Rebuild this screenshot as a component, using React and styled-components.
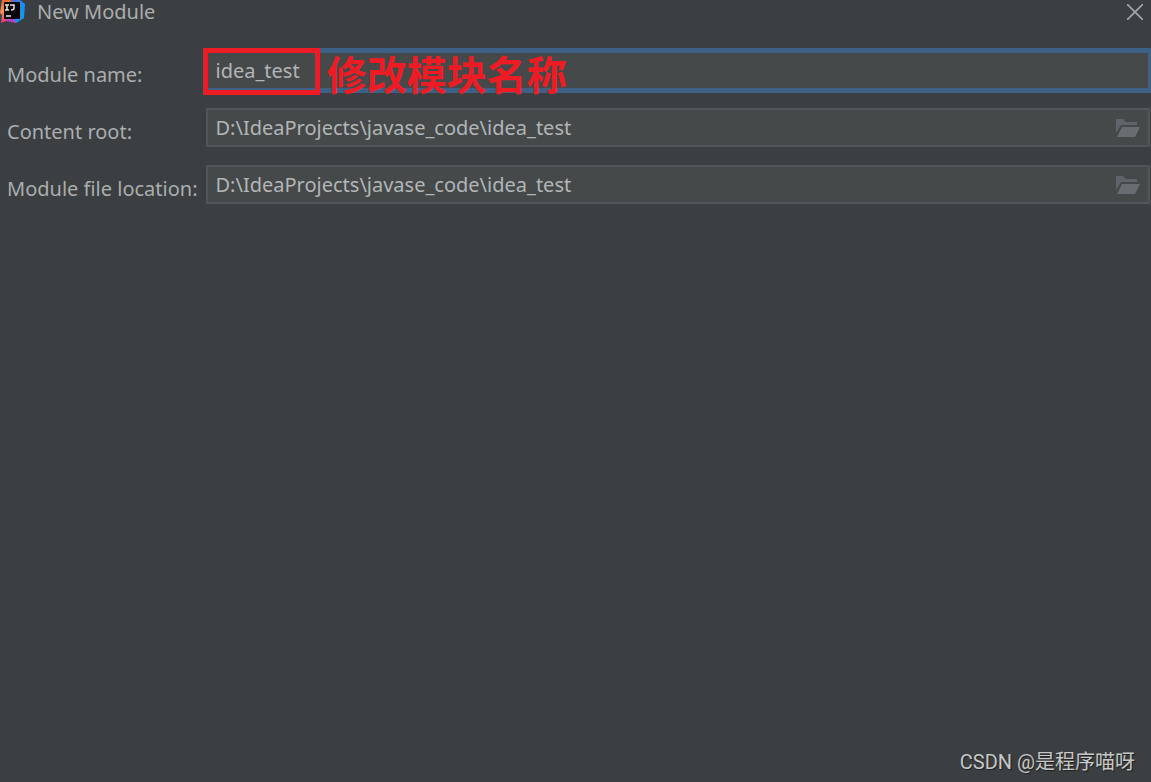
import { useState } from 'react';
import { createGlobalStyle, styled } from 'styled-components';

const FIELDS = [
  { id: 'moduleName', label: 'Module name:', value: 'idea_test', note: '修改模块名称' },
  { id: 'contentRoot', label: 'Content root:', value: 'D:\\IdeaProjects\\javase_code\\idea_test', browse: true },
  {
    id: 'moduleLocation',
    label: 'Module file location:',
    value: 'D:\\IdeaProjects\\javase_code\\idea_test',
    browse: true,
  },
];

function IdeaLogo() {
  return (
    <svg width='26' height='24' viewBox='0 0 26 24' aria-hidden='true'>
      <defs>
        <linearGradient id='ideaWarm' x1='0' y1='0' x2='0' y2='1'>
          <stop offset='0' stopColor='#e8692e' />
          <stop offset='0.5' stopColor='#f0925a' />
          <stop offset='1' stopColor='#ee2f78' />
        </linearGradient>
        <linearGradient id='ideaCool' x1='0' y1='0' x2='1' y2='1'>
          <stop offset='0' stopColor='#5a6ad0' />
          <stop offset='0.5' stopColor='#188cf0' />
          <stop offset='1' stopColor='#149ff5' />
        </linearGradient>
      </defs>
      <path d='M11 0h9l5 4-1 14-8 5-8-4z' fill='url(#ideaCool)' />
      <path d='M2 0h9v19l-5 2-5 2 1-8-2-2z' fill='url(#ideaWarm)' />
      <path d='M5 18l7-1 4 6-10-2z' fill='#b83fbd' />
      <path d='M4 2h16v17H4z' fill='#080609' />
      <path d='M5 5h4M7 5v5M5 10h4M10 5h4v3q0 2-3 2' fill='none' stroke='#e8e4e8' strokeWidth='1.5' />
      <path d='M6 16h5' stroke='#e8e4e8' strokeWidth='1.5' />
    </svg>
  );
}

function FolderIcon() {
  return (
    <svg width='24' height='18' viewBox='0 0 24 18' aria-hidden='true'>
      <path d='M0 0h7l3 3h11v3H5L0 14z' fill='#5f6468' />
      <path d='M6 8h18l-5 10H1z' fill='#686d71' />
    </svg>
  );
}

/**
 * 모듈 설정 한 줄
 * @param props
 * @param {string} props.note 입력값 옆에 표시되는 설명
 * @param {boolean} props.browse 폴더 선택 버튼 표시 여부
 */
function Field({ id, label, value, note, browse }) {
  const [text, setText] = useState(value);

  return (
    <>
      <StyledLabel htmlFor={id}>{label}</StyledLabel>
      <StyledInputBox $active={!!note}>
        <StyledInput id={id} value={text} spellCheck={false} onChange={event => setText(event.target.value)} />
        {browse && (
          <StyledIconButton type='button' aria-label='Browse'>
            <FolderIcon />
          </StyledIconButton>
        )}
        {note && (
          <StyledCallout>
            <StyledFrame />
            <StyledNote>{note}</StyledNote>
          </StyledCallout>
        )}
      </StyledInputBox>
    </>
  );
}

function App() {
  return (
    <StyledDialog>
      <GlobalStyle />
      <StyledTitleBar>
        <IdeaLogo />
        <StyledTitle>New Module</StyledTitle>
        <StyledIconButton type='button' aria-label='Close'>
          <svg width='16' height='16' viewBox='0 0 16 16' aria-hidden='true'>
            <path d='M0 0l16 16M16 0L0 16' stroke='#a4a6a7' strokeWidth='1.6' />
          </svg>
        </StyledIconButton>
      </StyledTitleBar>
      <StyledForm>
        {FIELDS.map(field => (
          <Field key={field.id} {...field} />
        ))}
      </StyledForm>
      <StyledWatermark>CSDN @是程序喵呀</StyledWatermark>
    </StyledDialog>
  );
}

export default App;

const GlobalStyle = createGlobalStyle`
  * {
    box-sizing: border-box;
  }

  body {
    margin: 0;
    background-color: #3c3f41;
    color: #abadae;
    font-family: 'Noto Sans', 'Noto Sans CJK SC', sans-serif;
    font-size: 20px;
    line-height: 24px;
  }
`;

const StyledDialog = styled.main`
  display: flex;
  flex-direction: column;
  min-height: 100vh;
`;

const StyledTitleBar = styled.header`
  display: flex;
  align-items: center;
  gap: 11px;
  padding-right: 8px;
`;

const StyledTitle = styled.h1`
  flex: 1;
  margin: 0;
  font-size: 20px;
  font-weight: 400;
`;

const StyledIconButton = styled.button`
  display: flex;
  padding: 0;
  border: 0;
  background: none;
  cursor: pointer;
`;

const StyledForm = styled.form`
  display: grid;
  grid-template-columns: auto 1fr;
  gap: 18px 8px;
  padding: 27px 1px 0 7px;
`;

const StyledLabel = styled.label`
  padding-top: 12px;
`;

const StyledInputBox = styled.div`
  position: relative;
  display: flex;
  align-items: center;
  height: 39px;
  padding: 0 8px;
  border: 2px solid ${({ $active }) => ($active ? '#3d6185' : '#525658')};
  box-shadow: ${({ $active }) => $active && '0 0 0 3px #3d6185'};
  background-color: #45494a;
`;

const StyledInput = styled.input`
  flex: 1;
  min-width: 0;
  padding: 0;
  border: 0;
  outline: 0;
  background: none;
  color: #b3b5b6;
  font: inherit;
`;

/* 입력창 위에 겹쳐지는 빨간 강조 표시 */
const StyledCallout = styled.div`
  position: absolute;
  top: -5px;
  left: -5px;
  display: flex;
  align-items: flex-start;
  gap: 7px;
  pointer-events: none;
`;

const StyledFrame = styled.span`
  width: 117px;
  height: 47px;
  border: 5px solid #ed1c24;
`;

const StyledNote = styled.strong`
  color: #ed1c24;
  font-family: 'Noto Sans CJK SC', sans-serif;
  font-size: 40px;
  font-weight: 700;
  line-height: 50px;
`;

const StyledWatermark = styled.footer`
  margin-top: auto;
  padding: 0 16px 8px;
  color: #c6c7c7;
  font-family: Roboto, 'Noto Sans CJK SC', sans-serif;
  text-align: right;
  text-shadow: 1px 1px 1px #1e2021;
`;
